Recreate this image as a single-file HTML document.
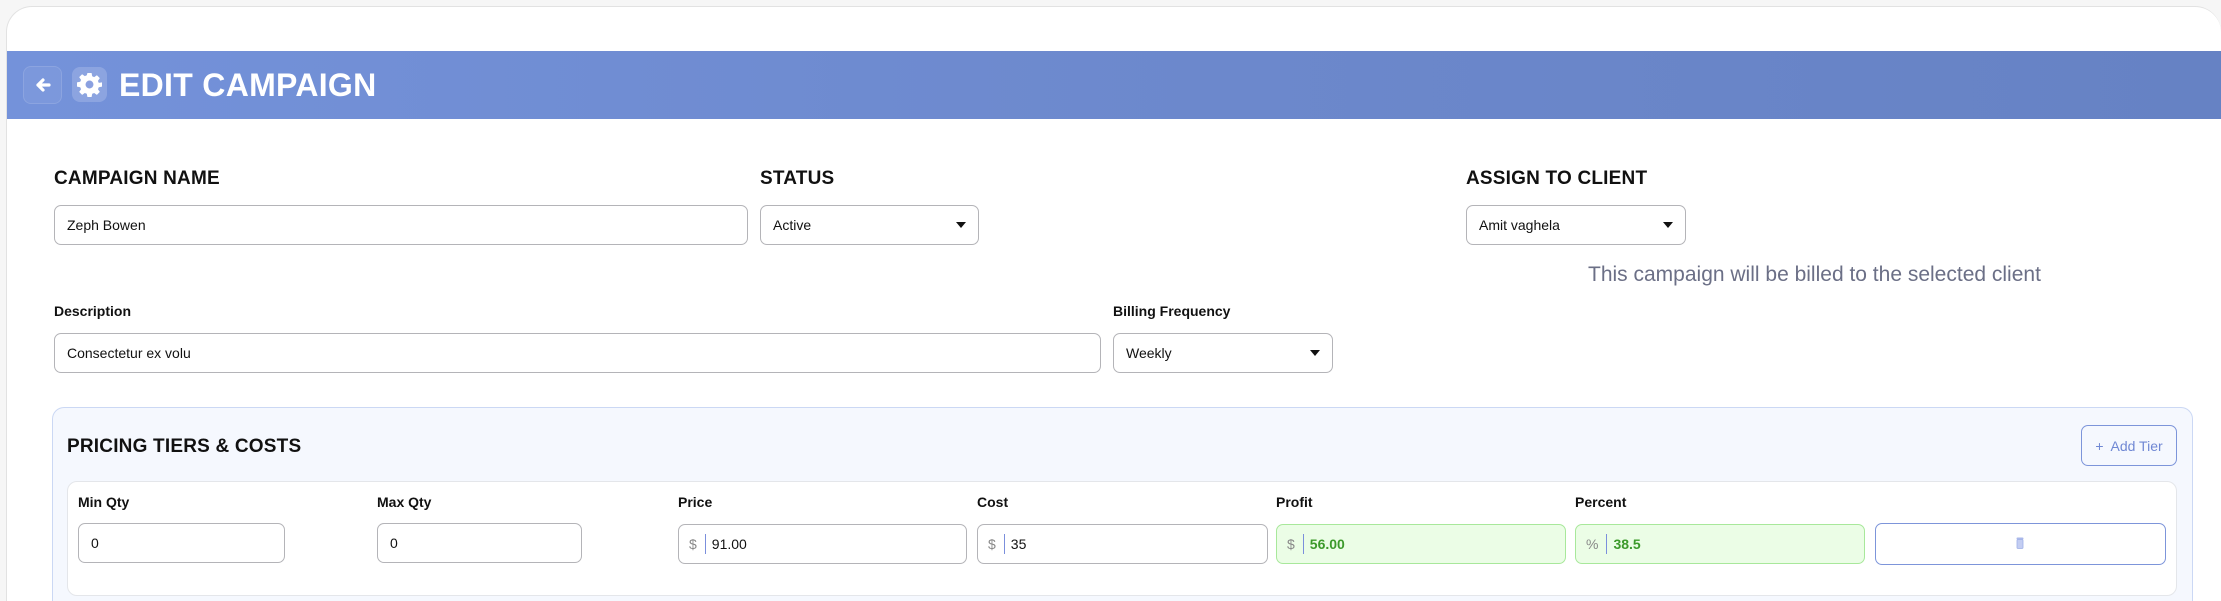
<!DOCTYPE html>
<html><head><meta charset="utf-8"><style>
*{box-sizing:border-box;margin:0;padding:0}
html,body{width:2221px;height:601px;overflow:hidden}
body{background:#f6f6f6;font-family:"Liberation Sans",sans-serif}
#w{position:relative;width:2221px;height:601px;overflow:hidden}
.card{position:absolute;left:6px;top:6px;width:2215px;height:595px;background:#fff;border:1px solid #e2e2e2;border-bottom:none;border-right:none;border-radius:26px 26px 0 0;overflow:hidden}
.hdr{position:absolute;left:7px;top:51px;width:2214px;height:68px;background:linear-gradient(90deg,#7492da,#6c88cc 55%,#6682c4)}
.a{position:absolute}
.lbl{position:absolute;font-weight:bold;color:#111;font-size:19px;letter-spacing:0.2px}
.sl{position:absolute;font-weight:bold;color:#111;font-size:14px}
.in{position:absolute;border:1.5px solid #b4b4b8;border-radius:7px;background:#fff;font-size:14px;color:#111;display:flex;align-items:center;padding-left:12px}
.car{position:absolute;right:12px;top:50%;margin-top:-3px;width:0;height:0;border-left:5px solid transparent;border-right:5px solid transparent;border-top:6px solid #111}
.pre{color:#888;margin-right:8px}
.bar{width:1px;height:20px;background:#7b8fdc;margin-right:6px}
.g{background:#ebfde6;border-color:#a8e89b;color:#3c9a2b;font-weight:bold}
</style></head><body><div id="w">
<div class="card"></div>
<div class="hdr"></div>
<div class="a" style="left:23px;top:66px;width:39px;height:38px;border-radius:8px;background:rgba(255,255,255,0.06);border:1px solid rgba(255,255,255,0.12)"></div>
<svg class="a" style="left:33px;top:75px" width="20" height="20" viewBox="0 0 20 20"><path d="M16 10H5M10 5L5 10L10 15" stroke="#fff" stroke-width="3.2" fill="none" stroke-linecap="round" stroke-linejoin="round"/></svg>
<div class="a" style="left:72px;top:67px;width:35px;height:35px;border-radius:8px;background:rgba(255,255,255,0.18)"></div>
<svg class="a" style="left:77px;top:72px" width="25" height="25" viewBox="0 0 24 24"><path fill="#fff" d="M10 1h4l.6 3.1 1.9.8 2.6-1.8 2.8 2.8-1.8 2.6.8 1.9L24 10v4l-3.1.6-.8 1.9 1.8 2.6-2.8 2.8-2.6-1.8-1.9.8L14 24h-4l-.6-3.1-1.9-.8-2.6 1.8-2.8-2.8 1.8-2.6-.8-1.9L0 14v-4l3.1-.6.8-1.9-1.8-2.6 2.8-2.8 2.6 1.8 1.9-.8z"/><circle cx="12" cy="12" r="3.8" fill="#8aa0e0"/></svg>
<div class="a" style="left:119px;top:67px;font-size:32px;font-weight:bold;color:#fff;letter-spacing:0.3px">EDIT CAMPAIGN</div>

<div class="lbl" style="left:54px;top:168px">CAMPAIGN NAME</div>
<div class="in" style="left:54px;top:205px;width:694px;height:40px">Zeph Bowen</div>
<div class="lbl" style="left:760px;top:168px">STATUS</div>
<div class="in" style="left:760px;top:205px;width:219px;height:40px">Active<span class="car"></span></div>
<div class="lbl" style="left:1466px;top:168px">ASSIGN TO CLIENT</div>
<div class="in" style="left:1466px;top:205px;width:220px;height:40px">Amit vaghela<span class="car"></span></div>
<div class="a" style="left:1588px;top:263px;font-size:21px;color:#6b6f86">This campaign will be billed to the selected client</div>

<div class="sl" style="left:54px;top:303px">Description</div>
<div class="in" style="left:54px;top:333px;width:1047px;height:40px">Consectetur ex volu</div>
<div class="sl" style="left:1113px;top:303px">Billing Frequency</div>
<div class="in" style="left:1113px;top:333px;width:220px;height:40px">Weekly<span class="car"></span></div>

<div class="a" style="left:52px;top:407px;width:2141px;height:194px;background:#f5f8fe;border:1.5px solid #cbd8f4;border-bottom:none;border-radius:12px 12px 0 0"></div>
<div class="lbl" style="left:67px;top:436px;font-size:19px">PRICING TIERS &amp; COSTS</div>
<div class="a" style="left:2081px;top:425px;width:96px;height:41px;border:1.5px solid #7d95da;border-radius:7px;color:#7088d4;font-size:14px;display:flex;align-items:center;justify-content:center">+&nbsp; Add Tier</div>
<div class="a" style="left:67px;top:481px;width:2110px;height:115px;background:#fff;border:1.5px solid #e4e6ea;border-radius:10px"></div>

<div class="sl" style="left:78px;top:494px">Min Qty</div>
<div class="sl" style="left:377px;top:494px">Max Qty</div>
<div class="sl" style="left:678px;top:494px">Price</div>
<div class="sl" style="left:977px;top:494px">Cost</div>
<div class="sl" style="left:1276px;top:494px">Profit</div>
<div class="sl" style="left:1575px;top:494px">Percent</div>

<div class="in" style="left:78px;top:523px;width:207px;height:40px">0</div>
<div class="in" style="left:377px;top:523px;width:205px;height:40px">0</div>
<div class="in" style="left:678px;top:524px;width:289px;height:40px;padding-left:10px"><span class="pre">$</span><span class="bar"></span>91.00</div>
<div class="in" style="left:977px;top:524px;width:291px;height:40px;padding-left:10px"><span class="pre">$</span><span class="bar"></span>35</div>
<div class="in g" style="left:1276px;top:524px;width:290px;height:40px;padding-left:10px"><span class="pre" style="font-weight:normal">$</span><span class="bar"></span>56.00</div>
<div class="in g" style="left:1575px;top:524px;width:290px;height:40px;padding-left:10px"><span class="pre" style="font-weight:normal">%</span><span class="bar"></span>38.5</div>
<div class="a" style="left:1875px;top:523px;width:291px;height:42px;border:1.5px solid #7d95da;border-radius:7px;background:#fff"></div>
<svg class="a" style="left:2016px;top:537px" width="8" height="12" viewBox="0 0 8 12"><rect x="0.5" y="0.5" width="7" height="2" rx="1" fill="#aab8ea"/><rect x="1" y="2.5" width="6" height="9" rx="1" fill="#c3cdf2" stroke="#9fb0e6" stroke-width="0.8"/></svg>
</div></body></html>
